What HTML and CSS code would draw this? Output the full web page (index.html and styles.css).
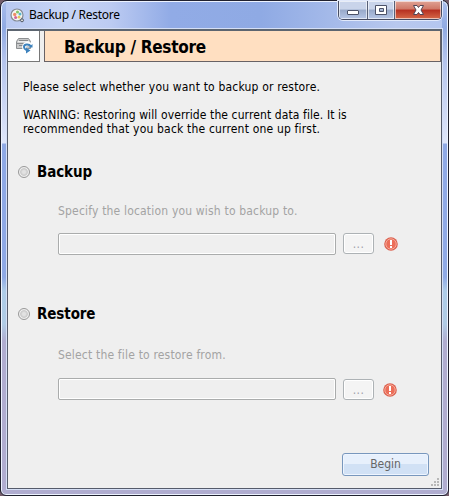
FILE: index.html
```html
<!DOCTYPE html>
<html lang="en">
<head>
<meta charset="utf-8">
<title>Backup / Restore</title>
<link rel="stylesheet" href="styles.css">
</head>
<body>
<div class="window">
  <div class="titlebar">
    <svg class="app-icon" width="15" height="15" viewBox="0 0 15 15">
      <circle cx="7" cy="7" r="6" fill="#f5f6f3" stroke="#858b94" stroke-width="1.2"/>
      <circle cx="4.7" cy="6.5" r="1.7" fill="#ef8d68"/><circle cx="7.5" cy="4" r="1.6" fill="#86c56a"/>
      <circle cx="10" cy="6" r="1.5" fill="#58b6ca"/><circle cx="5.6" cy="9.5" r="1.5" fill="#d4649c"/>
      <circle cx="9" cy="9.2" r="1.4" fill="#e6c55b"/>
      <circle cx="12" cy="12.3" r="1.5" fill="#ddd" stroke="#4f5967"/>
    </svg>
    <span class="caption">Backup / Restore</span>
    <div class="controls">
      <div class="control minimize"><svg width="28" height="17"><rect x="8.5" y="9.500" width="11" height="4" rx=".5" fill="#fff" stroke="#4c5268"/></svg></div>
      <div class="control maximize"><svg width="27" height="17"><path fill="#fff" fill-rule="evenodd" stroke="#4c5268" d="M7.500 4.500h11v9h-11zM11.500 7.500v3h4v-3z"/></svg></div>
      <div class="control close"><svg width="47" height="17"><path fill="#fff" stroke="#514454" stroke-linejoin="round" d="M18.500 4.500h3.500l1.500 2 1.500-2h3.500l-2.500 4.500 2.500 4.500h-3.500l-1.500-2-1.500 2h-3.500l2.500-4.500z"/></svg></div>
    </div>
  </div>
  <div class="client">
    <header class="header">
      <div class="header-icon">
        <svg width="18" height="17" viewBox="0 0 18 17">
          <path d="M3.500 1.500h10l2 3v7h-14v-7z" fill="#c8c9ca" stroke="#8d9092"/>
          <path d="M4 3.500h9M1.500 6.500h14M4 8.500h7" stroke="#878a8d" fill="none"/>
          <path d="M3 4.700h11" stroke="#f8f8f8"/>
          <path d="M16.500 9A4 4 0 0 0 9 9.700q0 2.500 3 4" stroke="#fff" stroke-width="4" fill="none"/>
          <path d="M16 9.500C14 6.500 9 7 9 10q0 2 2.500 3.200" stroke="#3d82bd" stroke-width="2" fill="none"/>
          <path d="M11 10.500v6l4.500-3z" fill="#3d82bd"/><path d="M13.500 10.500h4V7z" fill="#3d82bd"/>
        </svg>
      </div>
      <h1 class="header-title">Backup / Restore</h1>
    </header>
    <main class="content">
      <p class="intro">Please select whether you want to backup or restore.</p>
      <p class="warning"><span class="warning-lead">WARNING: Restoring will override the current data file. It is</span><br>recommended that you back the current one up first.</p>
      <section class="option backup">
        <div class="option-head"><i class="radio"></i><h2>Backup</h2></div>
        <p class="hint">Specify the location you wish to backup to.</p>
        <div class="picker"><div class="field"></div><div class="browse">...</div>
          <svg class="error" width="15" height="15" viewBox="0 0 15 15"><circle cx="7" cy="7" r="6.800" fill="#dc6150"/><circle cx="7" cy="7" r="5.200" fill="#ec6e59" stroke="#f6ac9b"/><path d="M6 3h2v5H6zM6 9h2v2H6z" fill="#fff"/></svg>
        </div>
      </section>
      <section class="option restore">
        <div class="option-head"><i class="radio"></i><h2>Restore</h2></div>
        <p class="hint">Select the file to restore from.</p>
        <div class="picker"><div class="field"></div><div class="browse">...</div>
          <svg class="error" width="15" height="15" viewBox="0 0 15 15"><circle cx="7" cy="7" r="6.800" fill="#dc6150"/><circle cx="7" cy="7" r="5.200" fill="#ec6e59" stroke="#f6ac9b"/><path d="M6 3h2v5H6zM6 9h2v2H6z" fill="#fff"/></svg>
        </div>
      </section>
      <div class="footer"><div class="begin">Begin</div></div>
    </main>
    <svg class="grip" width="9" height="9" fill="#b8b8b8"><path d="M6 0h2v2H6zM3 3h2v2H3zM6 3h2v2H6zM0 6h2v2H0zM3 6h2v2H3zM6 6h2v2H6z"/></svg>
  </div>
</div>
</body>
</html>
```

FILE: styles.css
```css
* { box-sizing: border-box; }
body { margin: 0; background: #735c6a; color: #000; font: 12px/14px "DejaVu Sans Condensed", "DejaVu Sans", sans-serif; }
h1, h2, p { margin: 0; white-space: nowrap; }
.window {
  width: 449px; height: 496px; padding: 0 6px 5px 5px;
  border: 1px solid #20212f; border-radius: 7px 7px 6px 6px;
  box-shadow: inset 0 0 0 1px #edf3ff;
  background: linear-gradient(#a9bdec 0, #90aae3 27px, #b5c4ed 60px, #dfe6fa 142px, #8fa9e5 143px, #8fa9e5 266px, #8fa9e5 276px, #aecce8 290px, #b0cbe5 323px, #b0add0 340px, #b0add0 100%);
}
.titlebar {
  height: 28px; display: flex; align-items: flex-start; padding-left: 4px; margin-top: 1px; margin-bottom: -1px;
  background: linear-gradient(90deg, #b9c9f1 0, #c7d5f5 60px, #bccbf2 105px, #91abe6 165px, #8faae4 255px, #b8c8ee 390px, #b4c6ef);
}
.app-icon { margin-top: 6px; flex: none; }
.caption { margin: 5px 0 0 4px; font: 12px/16px "Noto Sans", sans-serif; letter-spacing: -.29px; white-space: nowrap; flex: 1; }
.controls { display: flex; height: 19px; margin-top: -1px; border: 1px solid #474d63; border-top: 0; border-radius: 0 0 5px 5px; overflow: hidden; box-shadow: 0 0 0 1px #e1e9fb; }
.control { height: 18px; border-left: 1px solid #576077; box-shadow: inset 0 0 0 1px #ffffff99; background: linear-gradient(#c9d4ea 0 45%, #98a9c9 50%, #b6c6e6); }
.control svg { display: block; }
.minimize { width: 28px; border-left: 0; }
.maximize { width: 27px; }
.close { width: 47px; background: linear-gradient(#e0a395 0, #cf7767 45%, #b62f20 50%, #d66a49); }
.client { position: relative; width: 435px; height: 460px; border: 1px solid #555b6b; border-top: 2px solid #5c6570; background: #efefef; box-shadow: 0 0 0 1px #d5dff5; display: flex; flex-direction: column; margin-left: 1px; }
.header { display: flex; gap: 4px; height: 31px; flex: none; }
.header-icon { width: 32px; border-right: 1px solid #777; border-bottom: 1px solid #777; background: #fff; padding: 6px 0 0 7px; }
.header-title { width: 397px; border: 1px solid #686265; border-top: 0; background: #ffdfc1; padding-left: 19px; font: bold 17px/32px "DejaVu Sans Condensed", sans-serif; letter-spacing: -.28px; }
.content { padding: 0 0 0 15px; display: flex; flex-direction: column; letter-spacing: .18px; }
.intro { margin-top: 18px; }
.warning { margin-top: 14px; }
.warning-lead { letter-spacing: .1px; }
.option { margin-left: -5px; }
.option-head { display: flex; align-items: center; height: 18px; gap: 7px; }
.backup { margin-top: 27px; }
.restore { margin-top: 50px; }
.radio { width: 12px; height: 12px; border: 1px solid #999; border-radius: 50%; background: radial-gradient(circle, #e2e2e2 20%, #c9c9c9 48%, #eee 60%); }
h2 { font: bold 15px/18px "DejaVu Sans Condensed", sans-serif; letter-spacing: -.1px; }
.hint { margin: 23px 0 0 40px; color: #a3a3a3; line-height: 14px; }
.restore .hint { margin-top: 25px; }
.picker { display: flex; align-items: flex-start; margin: 15px 0 0 40px; height: 22px; }
.restore .picker { margin-top: 16px; }
.field { width: 278px; height: 22px; border: 1px solid #aaacac; border-radius: 2px; box-shadow: inset 0 0 0 1px #fff; }
.browse { width: 31px; height: 21px; margin-left: 7px; border: 1px solid #adb2b5; border-radius: 3px; box-shadow: inset 0 0 0 1px #fff; background: #f4f4f4; color: #a0a0a8; text-align: center; line-height: 20px; letter-spacing: .4px; }
.restore .browse { margin-top: 1px; }
.error { margin: 4px 0 0 10px; }
.restore .error { margin: 5px 0 0 9px; }
.footer { margin: 53px 0 0 319px; }
.begin { width: 87px; height: 23px; border: 1px solid #7897bd; border-radius: 3px; background: linear-gradient(#e7f0fc 0 48%, #d1e1f5 50%); box-shadow: inset 0 0 0 1px #eef5ff; color: #666; text-align: center; line-height: 21px; letter-spacing: 0; }
.grip { position: absolute; right: 1px; bottom: 1px; }
```
